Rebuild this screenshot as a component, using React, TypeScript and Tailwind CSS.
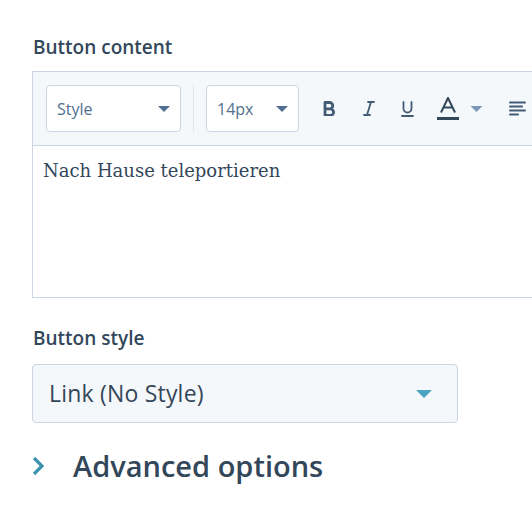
import React from 'react';

const ui = { fontFamily: '"Open Sans", Lato, sans-serif' };
const serif = { fontFamily: '"DejaVu Serif", Georgia, serif' };

const Caret = ({ className }: { className: string }) => (
  <svg viewBox="0 0 12 6" className={className}>
    <path d="M0 0h12L6 6z" fill="currentColor" />
  </svg>
);

const Dropdown = ({ label, width }: { label: string; width: string }) => (
  <div
    className={`${width} h-[47px] flex items-center justify-between rounded-[4px] border border-[#cbd6e2] bg-white pl-[10px] pr-[10px] text-[16px] text-[#516f90]`}
  >
    <span>{label}</span>
    <Caret className="w-[12px] h-[6px] text-[#516f90]" />
  </div>
);

export default function App() {
  return (
    <div className="w-[532px] h-[512px] overflow-hidden bg-white text-[#33475b]" style={ui}>
      <div className="pl-[32px] pt-[35px]">
        {/* Button content */}
        <div className="text-[19px] leading-[24px] font-semibold pl-[1px]">Button content</div>

        <div className="mt-[12px] w-[540px] border border-[#cbd6e2]">
          {/* toolbar */}
          <div className="flex items-center bg-[#f5f8fa] border-b border-[#cbd6e2] pl-[13px] py-[13px]">
            <Dropdown label="Style" width="w-[135px]" />
            <div className="mx-[12px] w-px h-[47px] bg-[#dfe3eb]" />
            <Dropdown label="14px" width="w-[93px]" />

            <div className="ml-[24px] flex items-center text-[#425b76]">
              {/* bold */}
              <svg viewBox="0 0 12 15" className="w-[12px] h-[15px]">
                <path
                  d="M2 1.5h4.6a3.2 3.2 0 0 1 0 6.4H2zM2 7.9h5.3a3.3 3.3 0 0 1 0 6.6H2z"
                  fill="none"
                  stroke="currentColor"
                  strokeWidth="2.8"
                  strokeLinejoin="round"
                />
              </svg>
              {/* italic */}
              <svg viewBox="0 0 12 15" className="ml-[28px] w-[12px] h-[15px]">
                <path
                  d="M5 1h6M1 14h6M8 1L4 14"
                  fill="none"
                  stroke="currentColor"
                  strokeWidth="1.8"
                  strokeLinecap="round"
                />
              </svg>
              {/* underline */}
              <svg viewBox="0 0 13 16" className="ml-[26px] w-[13px] h-[16px]">
                <path
                  d="M2.5 1v6.5a4 4 0 0 0 8 0V1"
                  fill="none"
                  stroke="currentColor"
                  strokeWidth="1.8"
                  strokeLinecap="round"
                />
                <path d="M1 15h11" stroke="currentColor" strokeWidth="1.8" strokeLinecap="round" />
              </svg>
              {/* text colour */}
              <svg viewBox="0 0 22 24" className="ml-[23px] w-[22px] h-[24px] text-[#33475b]">
                <path
                  d="M4 15.5L11 1l7 14.5M6.5 10.5h9"
                  fill="none"
                  stroke="currentColor"
                  strokeWidth="2"
                  strokeLinejoin="round"
                />
                <rect x="0" y="20" width="22" height="3" fill="currentColor" />
              </svg>
              <Caret className="ml-[11px] w-[13px] h-[6px] text-[#7c98b6]" />
              {/* align */}
              <svg viewBox="0 0 17 15" className="ml-[26px] w-[17px] h-[15px]">
                <path
                  d="M1 1.5h15M1 5.5h12M1 9.5h15M1 13.5h8"
                  fill="none"
                  stroke="currentColor"
                  strokeWidth="2"
                  strokeLinecap="round"
                />
              </svg>
            </div>
          </div>

          {/* content */}
          <div className="h-[151px] bg-white pl-[10px] pt-[12px]">
            <p className="text-[18px] leading-[26px] text-[#33475b]" style={serif}>
              Nach Hause teleportieren
            </p>
          </div>
        </div>

        {/* Button style */}
        <div className="mt-[28px] text-[19px] leading-[24px] font-semibold pl-[1px]">Button style</div>
        <div className="mt-[14px] w-[426px] h-[59px] flex items-center justify-between rounded-[4px] border border-[#cbd6e2] bg-[#f5f8fa] pl-[16px] pr-[24px]">
          <span className="text-[23px] tracking-[0.2px]">Link (No Style)</span>
          <Caret className="w-[18px] h-[8px] text-[#4aa3bf]" />
        </div>

        {/* Advanced options */}
        <div className="mt-[25px] flex items-center">
          <svg viewBox="0 0 12 20" className="w-[12px] h-[20px] text-[#3b93ad]">
            <path d="M2 2l8 8-8 8" fill="none" stroke="currentColor" strokeWidth="3.2" />
          </svg>
          <span className="ml-[29px] text-[29px] leading-[36px] font-semibold">Advanced options</span>
        </div>
      </div>
    </div>
  );
}
